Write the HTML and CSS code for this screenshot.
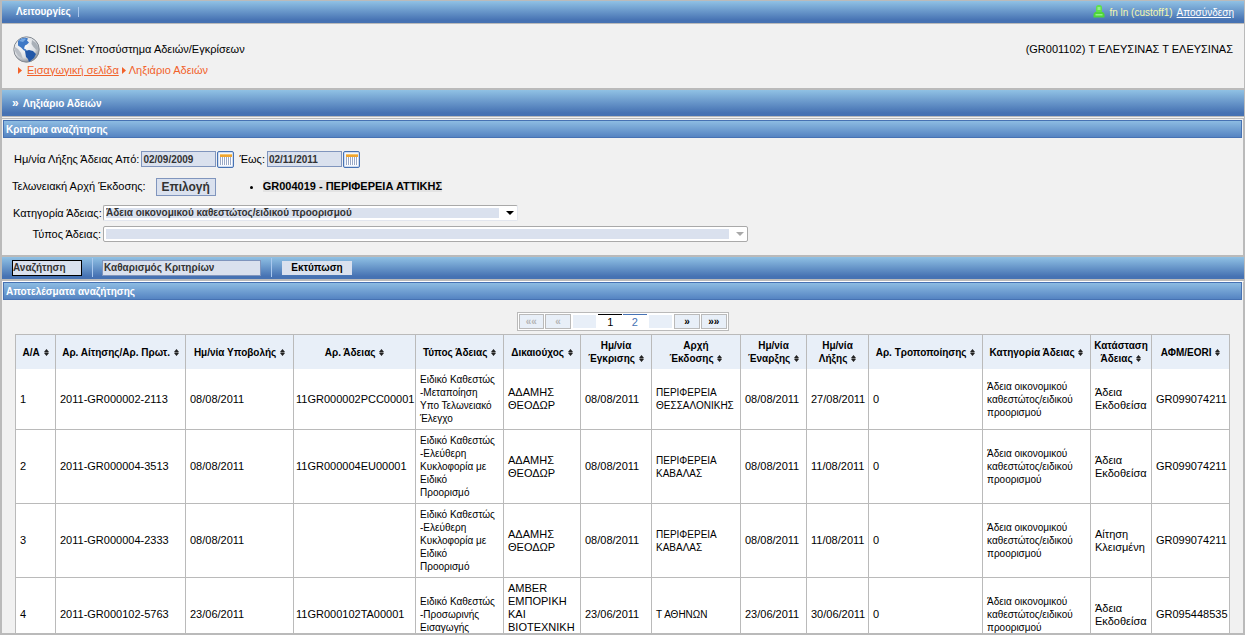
FILE: index.html
```html
<!DOCTYPE html>
<html lang="el">
<head>
<meta charset="utf-8">
<title>ICISnet: Ληξιάριο Αδειών</title>
<link rel="stylesheet" href="styles.css">
</head>
<body>
<svg class="defs" aria-hidden="true">
  <symbol id="sort" viewBox="0 0 5 7"><path d="M2.500 0 5 3H0zM2.500 7 5 4H0z" fill="#222"/><path d="M.5 3h4v1h-4z" fill="#777"/></symbol>
  <symbol id="crumb" viewBox="0 0 4 7"><path d="M0 0 4 3.500 0 7z" fill="#f2622a"/></symbol>
  <symbol id="calendar" viewBox="0 0 15 15">
    <rect x="1" y="1" width="13" height="13" fill="#f4f8fd"/>
    <path d="M2 2h12v3H2z" fill="#f0a52e"/><path d="M2 2h12v1H2z" fill="#f8c56b"/>
    <path d="M2 5h12v8H2z" fill="#fff"/>
    <path d="M2.500 5v8M4.500 5v8M6.500 5v8M8.500 5v8M10.500 5v8M12.500 5v8" stroke="#9aa9c6"/>
  </symbol>
</svg>
<div class="app">
  <nav class="topbar">
    <a class="menu" href="#">Λειτουργίες</a>
    <div class="user">
      <svg class="user-icon" viewBox="0 0 12 14"><rect x="3" y="0" width="6" height="8" rx="2.500" fill="#5fe04c"/><path d="M2 7h8l1.500 2v3.500H.5V9z" fill="#4fd63c"/><path d="M4.500 2h3v3h-3zM2.500 9h7v1.500h-7z" fill="#92f086"/></svg>
      <span>fn ln (custoff1)</span>
      <a href="#">Αποσύνδεση</a>
    </div>
  </nav>

  <header class="header">
    <div class="brand">
      <svg class="globe" viewBox="0 0 27 27">
        <defs><radialGradient id="sea" cx=".4" cy=".35" r=".65"><stop offset="0" stop-color="#fff"/><stop offset=".7" stop-color="#dcdfe3"/><stop offset="1" stop-color="#8d949d"/></radialGradient></defs>
        <circle cx="13.500" cy="13.500" r="12.700" fill="url(#sea)" stroke="#858b93"/>
        <path d="M5 5C8 1.500 13 1.300 15 2.500l-1 2 2 2-2 2-2 1-1 3 2 1 1 2-3-1-3-3-3-2z" fill="#3f79c6"/>
        <path d="M12 15l4-1 4 1 3 3-2 4-5 4-1-3-2-2z" fill="#2258a8"/>
        <path d="M19 4l4 3 2.500 5-2 2-3-3-2-3z" fill="#a9b0b8"/>
        <path d="M2 11l3 2 3 4 2 6-5-3-3-5z" fill="#b9bec5"/>
        <path d="M6 5c2-2 5-3 7-2l-3 3z" fill="#76a8e2"/>
      </svg>
      <span>ICISnet: Υποσύστημα Αδειών/Εγκρίσεων</span>
      <span class="office">(GR001102) Τ ΕΛΕΥΣΙΝΑΣ Τ ΕΛΕΥΣΙΝΑΣ</span>
    </div>
    <div class="crumbs">
      <svg class="crumb"><use href="#crumb"/></svg>
      <a href="#">Εισαγωγική σελίδα</a>
      <svg class="crumb"><use href="#crumb"/></svg>
      <span>Ληξιάριο Αδειών</span>
    </div>
  </header>

  <h1 class="page-title"><span>»</span> Ληξιάριο Αδειών</h1>

  <form class="criteria">
    <h2 class="section-title">Κριτήρια αναζήτησης</h2>
    <div class="row dates">
      <label for="from">Ημ/νία Λήξης Άδειας Από:</label>
      <input class="date" id="from" type="text" value="02/09/2009">
      <button class="cal" type="button" aria-label="Από"><svg><use href="#calendar"/></svg></button>
      <label class="to" for="to">Έως:</label>
      <input class="date" id="to" type="text" value="02/11/2011">
      <button class="cal" type="button" aria-label="Έως"><svg><use href="#calendar"/></svg></button>
    </div>
    <div class="row authority">
      <span class="authority-label">Τελωνειακή Αρχή Έκδοσης:</span>
      <button class="pick" type="button">Επιλογή</button>
      <ul><li><mark>GR004019 - ΠΕΡΙΦΕΡΕΙΑ ΑΤΤΙΚΗΣ</mark></li></ul>
    </div>
    <div class="row choice">
      <label for="category">Κατηγορία Άδειας:</label>
      <div class="drop category"><select id="category"><option>Άδεια οικονομικού καθεστώτος/ειδικού προορισμού</option></select></div>
    </div>
    <div class="row choice">
      <label for="type">Τύπος Άδειας:</label>
      <div class="drop type"><select id="type" disabled><option></option></select></div>
    </div>
  </form>

  <div class="toolbar">
    <button class="search" type="button">Αναζήτηση</button>
    <button class="clear" type="button">Καθαρισμός Κριτηρίων</button>
    <button class="print" type="button">Εκτύπωση</button>
  </div>

  <section class="results">
    <h2 class="section-title">Αποτελέσματα αναζήτησης</h2>
    <nav class="pager">
      <button type="button" disabled>««</button>
      <button type="button" disabled>«</button>
      <i></i>
      <a class="current" href="#">1</a>
      <a href="#">2</a>
      <i></i>
      <button type="button">»</button>
      <button type="button">»»</button>
    </nav>
    <div class="table-wrap">
    <table>
      <colgroup><col class="w40"><col class="w130"><col class="w108"><col class="w122"><col class="w88"><col class="w77"><col class="w71"><col class="w89"><col class="w66"><col class="w62"><col class="w114"><col class="w108"><col class="w61"><col class="w78"></colgroup>
      <thead>
        <tr>
          <th>Α/Α <svg><use href="#sort"/></svg></th>
          <th>Αρ. Αίτησης/Αρ. Πρωτ. <svg><use href="#sort"/></svg></th>
          <th>Ημ/νία Υποβολής <svg><use href="#sort"/></svg></th>
          <th>Αρ. Άδειας <svg><use href="#sort"/></svg></th>
          <th>Τύπος Άδειας <svg><use href="#sort"/></svg></th>
          <th>Δικαιούχος <svg><use href="#sort"/></svg></th>
          <th>Ημ/νία<br>Έγκρισης <svg><use href="#sort"/></svg></th>
          <th>Αρχή<br>Έκδοσης <svg><use href="#sort"/></svg></th>
          <th>Ημ/νία<br>Έναρξης <svg><use href="#sort"/></svg></th>
          <th>Ημ/νία<br>Λήξης <svg><use href="#sort"/></svg></th>
          <th>Αρ. Τροποποίησης <svg><use href="#sort"/></svg></th>
          <th>Κατηγορία Άδειας <svg><use href="#sort"/></svg></th>
          <th>Κατάσταση<br>Άδειας <svg><use href="#sort"/></svg></th>
          <th>ΑΦΜ/EORI <svg><use href="#sort"/></svg></th>
        </tr>
      </thead>
      <tbody>
        <tr><td>1</td><td>2011-GR000002-2113</td><td>08/08/2011</td><td class="licence">11GR000002PCC00001</td><td class="dense">Ειδικό Καθεστώς<br>-Μεταποίηση<br>Υπο Τελωνειακό<br>Έλεγχο</td><td>ΑΔΑΜΗΣ<br>ΘΕΟΔΩΡ</td><td>08/08/2011</td><td class="dense">ΠΕΡΙΦΕΡΕΙΑ<br>ΘΕΣΣΑΛΟΝΙΚΗΣ</td><td>08/08/2011</td><td>27/08/2011</td><td>0</td><td class="dense">Άδεια οικονομικού<br>καθεστώτος/ειδικού<br>προορισμού</td><td>Άδεια<br>Εκδοθείσα</td><td>GR099074211</td></tr>
        <tr><td>2</td><td>2011-GR000004-3513</td><td>08/08/2011</td><td class="licence">11GR000004EU00001</td><td class="dense">Ειδικό Καθεστώς<br>-Ελεύθερη<br>Κυκλοφορία με<br>Ειδικό<br>Προορισμό</td><td>ΑΔΑΜΗΣ<br>ΘΕΟΔΩΡ</td><td>08/08/2011</td><td class="dense">ΠΕΡΙΦΕΡΕΙΑ<br>ΚΑΒΑΛΑΣ</td><td>08/08/2011</td><td>11/08/2011</td><td>0</td><td class="dense">Άδεια οικονομικού<br>καθεστώτος/ειδικού<br>προορισμού</td><td>Άδεια<br>Εκδοθείσα</td><td>GR099074211</td></tr>
        <tr><td>3</td><td>2011-GR000004-2333</td><td>08/08/2011</td><td class="licence"></td><td class="dense">Ειδικό Καθεστώς<br>-Ελεύθερη<br>Κυκλοφορία με<br>Ειδικό<br>Προορισμό</td><td>ΑΔΑΜΗΣ<br>ΘΕΟΔΩΡ</td><td>08/08/2011</td><td class="dense">ΠΕΡΙΦΕΡΕΙΑ<br>ΚΑΒΑΛΑΣ</td><td>08/08/2011</td><td>11/08/2011</td><td>0</td><td class="dense">Άδεια οικονομικού<br>καθεστώτος/ειδικού<br>προορισμού</td><td>Αίτηση<br>Κλεισμένη</td><td>GR099074211</td></tr>
        <tr><td>4</td><td>2011-GR000102-5763</td><td>23/06/2011</td><td class="licence">11GR000102TA00001</td><td class="dense">Ειδικό Καθεστώς<br>-Προσωρινής<br>Εισαγωγής</td><td>AMBER<br>ΕΜΠΟΡΙΚΗ<br>ΚΑΙ<br>ΒΙΟΤΕΧΝΙΚΗ<br>&nbsp;</td><td>23/06/2011</td><td class="dense">Τ ΑΘΗΝΩΝ</td><td>23/06/2011</td><td>30/06/2011</td><td>0</td><td class="dense">Άδεια οικονομικού<br>καθεστώτος/ειδικού<br>προορισμού</td><td>Άδεια<br>Εκδοθείσα</td><td>GR095448535</td></tr>
      </tbody>
    </table>
    </div>
  </section>
</div>
</body>
</html>
```
FILE: styles.css
```css
* { box-sizing: border-box; }
body {
  margin: 0;
  background: #fff;
  color: #000;
  font: 11px/13px "Liberation Sans", Arial, sans-serif;
}
button, input, select { font: inherit; color: #333; margin: 0; border-radius: 0; }
.defs { display: none; }

.app {
  height: calc(100vh - 2px);
  margin-right: 1px;
  border: 2px solid #bababa;
  border-top-width: 1px;
  border-right-width: 1px;
  background: #f1f1f1;
  overflow: hidden;
}

.topbar, .page-title, .toolbar {
  background: linear-gradient(#90c1e4, #4672b3 88%);
  color: #fff;
}
.topbar {
  display: flex;
  justify-content: space-between;
  align-items: center;
  height: 23px;
  padding: 0 10px 0 14px;
  border-bottom: 1px solid #bababa;
  font-size: 10px;
}
.topbar a { color: #fff; }
.menu {
  padding-right: 7px;
  border-right: 1px solid #a9c8ee;
  font-weight: bold;
  line-height: 10px;
  text-decoration: none;
}
.user { display: flex; align-items: center; gap: 4px; color: #f4f8b0; }
.user-icon { width: 12px; height: 14px; }

.header { height: 64px; padding: 10px 11px 0; }
.brand { display: flex; align-items: center; gap: 5px; height: 28px; padding-top: 2px; }
.globe { width: 27px; height: 27px; flex: none; }
.office { margin-left: auto; }
.crumbs { display: flex; align-items: center; gap: 3px; padding: 2px 5px; color: #f2622a; }
.crumbs a { color: #f2622a; }
.crumbs > a:nth-child(2) { margin-left: 2px; }
.crumb { width: 4px; height: 7px; }

.page-title {
  margin: 0;
  padding: 7px 10px 6px;
  border-top: 2px solid #bababa;
  border-bottom: 1px solid #bababa;
  font-size: 10px;
  line-height: 13px;
}
.page-title span { margin-right: 2px; font-size: 12px; }

.criteria, .results { border-top: 1px solid #bababa; border-right: 1px solid #bababa; }
.section-title {
  margin: 1px 1px 0;
  padding: 2px 2px 1px;
  border: 1px solid #4672b3;
  background: linear-gradient(#8dbce2, #5584c2);
  color: #fff;
  font-size: 10px;
  line-height: 13px;
}

.criteria { height: 137px; margin-top: 1px; }
.row { display: flex; align-items: center; }
.dates { height: 18px; margin-top: 12px; padding-left: 12px; }
.date {
  width: 75px;
  height: 16px;
  margin: 0 1px 0 2px;
  padding: 0 1px;
  border: 1px solid #8095bd;
  background: #dae1ee;
  font-size: 10px;
  font-weight: bold;
}
.cal { width: 17px; height: 17px; padding: 0; border: 1px solid #4672b3; border-radius: 2px; background: #cfdcf0; }
.cal svg { display: block; width: 15px; height: 15px; }
.to { margin-left: 5px; }

.authority {
  height: 25px;
  margin: 6px 0 0 -2px;
  padding-left: 10px;
  border-left: 2px solid #fff;
}
.pick {
  height: 18px;
  width: 60px;
  margin-left: 10px;
  padding: 0;
  border: 1px solid #8095bd;
  background: #dae1ee;
  font-size: 12px;
  font-weight: bold;
  line-height: 16px;
}
.authority ul { margin: 0; padding-left: 47px; }
mark { background: #e3e3e3; color: #000; font-weight: bold; }

.choice { height: 16px; margin-top: 6px; padding-left: 11px; gap: 2px; }
.choice + .choice { margin-top: 5px; }
.choice label { width: 88px; text-align: right; white-space: nowrap; }
.drop { position: relative; height: 16px; }
.category { width: 415px; }
.type { width: 645px; }
.drop select {
  display: block;
  width: 100%;
  height: 16px;
  appearance: none;
  padding: 2px 18px 2px 2px;
  border: 1px solid #e2e6ee;
  border-top-color: #a9a9a9;
  border-left-color: #a9a9a9;
  border-radius: 2px;
  background: linear-gradient(#dae1ee, #dae1ee) content-box, #fff;
  font-size: 10px;
  font-weight: bold;
  line-height: 10px;
  opacity: 1;
}
.drop.type select { border-color: #a9a9a9; }
.drop::after {
  content: "";
  position: absolute;
  top: 6px;
  right: 4px;
  border: 4px solid transparent;
  border-top-color: #000;
  border-bottom: 0;
  pointer-events: none;
}
.type::after { border-top-color: #a9a9a9; }

.toolbar {
  display: flex;
  align-items: center;
  height: 26px;
  padding: 0 10px;
  border-top: 2px solid #bababa;
  border-bottom: 2px solid #bababa;
}
.toolbar button {
  height: 16px;
  padding: 0 1px;
  border: 1px solid #8095bd;
  background: #dae1ee;
  font-size: 10px;
  font-weight: bold;
  line-height: 14px;
  text-align: left;
}
.toolbar .search { width: 70px; padding: 0; outline: 1px solid #000; outline-offset: -1px; border-color: #000; }
.toolbar .clear { width: 159px; margin-left: 20px; }
.toolbar .print { width: 70px; height: 14px; margin-left: 21px; border: 0; color: #000; text-align: center; }
.toolbar .clear, .toolbar .print { position: relative; }
.toolbar .clear::before, .toolbar .print::before {
  content: "";
  position: absolute;
  top: -3px;
  left: -11px;
  width: 1px;
  height: 19px;
  background: #a9c8ee;
}

.results { border-top-color: #fff; }
.results .section-title { margin-top: 0; }
.pager {
  display: flex;
  gap: 1px;
  width: 212px;
  height: 19px;
  margin: 12px auto 3px;
  padding: 1px;
  border: 1px solid #bababa;
  background: #fff;
}
.pager button, .pager a, .pager i { flex: 1; padding: 0; text-align: center; line-height: 14px; }
.pager button { border: 1px solid #bababa; background: #e8eff8; color: #000; font-size: 10px; font-weight: bold; line-height: 12px; }
.pager button:disabled { color: #b4b4b4; }
.pager i { margin: 1px; background: #e8eff8; }
.pager a { border-top: 1px solid #4672b3; color: #4672b3; text-decoration: none; }
.pager .current { border-color: #000; color: #000; }

.table-wrap { padding: 0 13px; }
table { width: 100%; table-layout: fixed; border-collapse: collapse; background: #fff; }
th, td { padding: 4px; border: 1px solid #bababa; white-space: nowrap; text-align: left; vertical-align: middle; }
th { padding: 4px 2px; background: #e8eff8; border-bottom: 0; text-align: center; font-size: 10px; }
tbody tr:first-child td { border-top: 0; }
.licence { padding: 4px 2px; }
.dense { font-size: 10px; }
th svg { width: 5px; height: 7px; margin-left: 1px; }
.w40 { width: 40px; }
.w61 { width: 61px; }
.w62 { width: 62px; }
.w66 { width: 66px; }
.w71 { width: 71px; }
.w77 { width: 77px; }
.w78 { width: 78px; }
.w88 { width: 88px; }
.w89 { width: 89px; }
.w108 { width: 108px; }
.w114 { width: 114px; }
.w122 { width: 122px; }
.w130 { width: 130px; }
```
